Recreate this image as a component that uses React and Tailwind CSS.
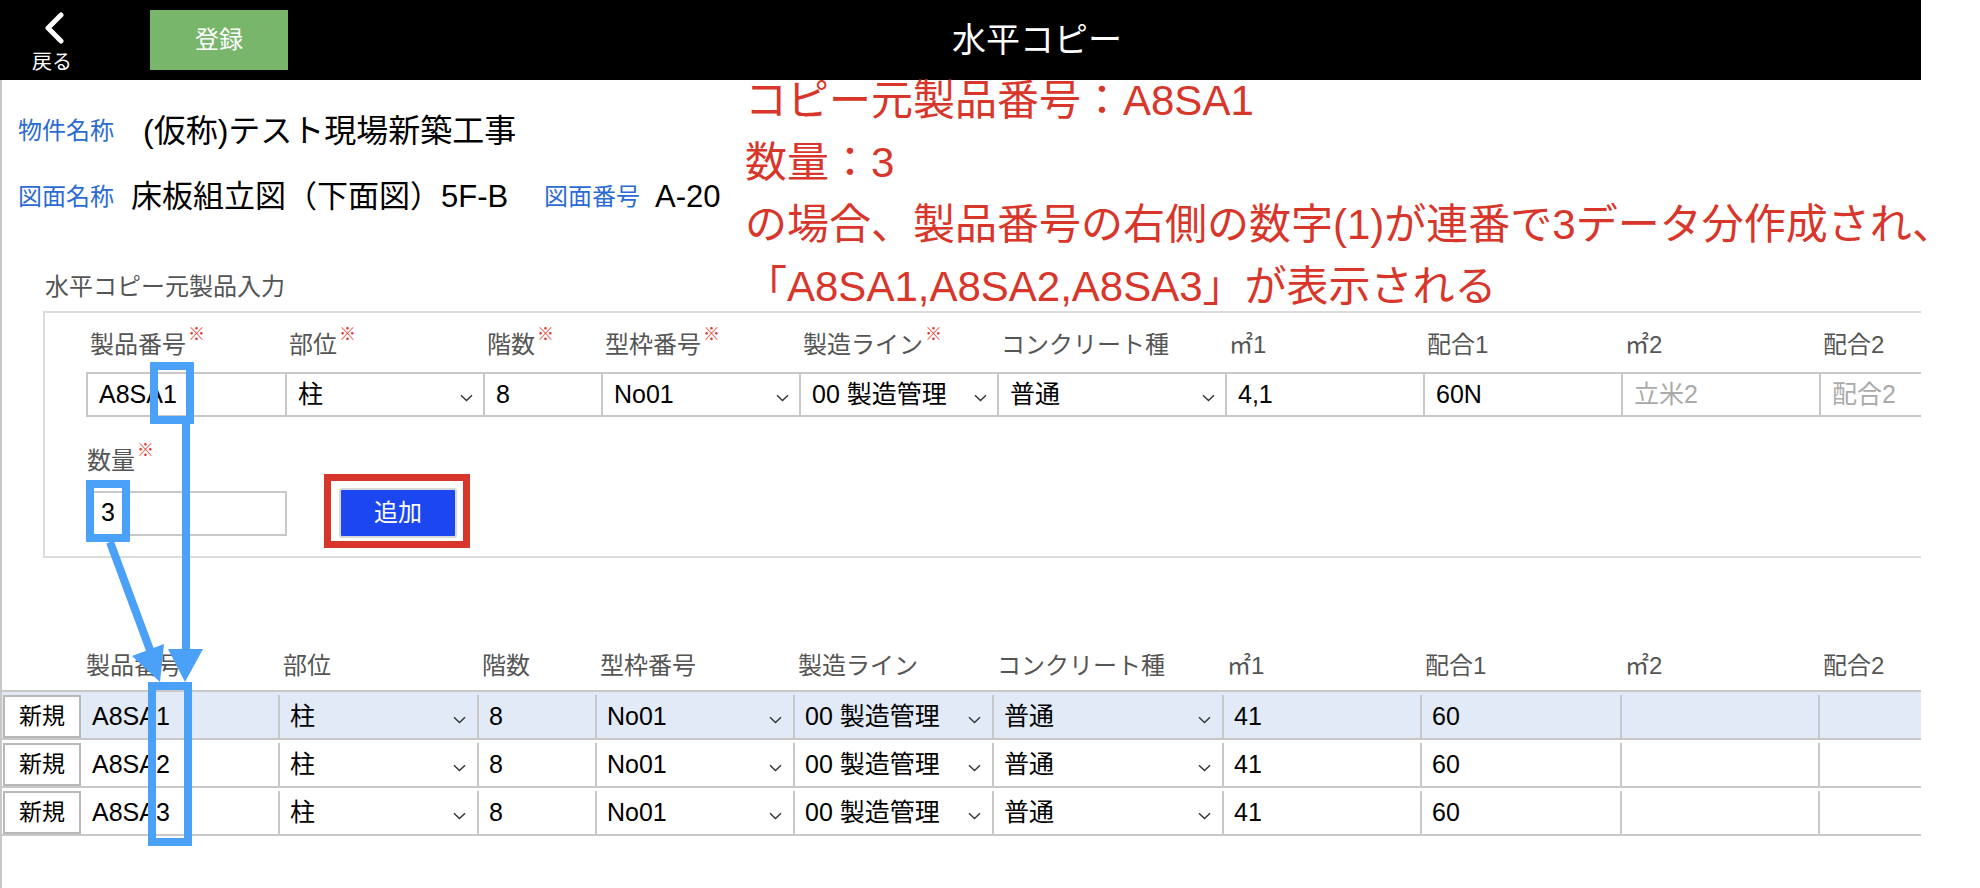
import React from 'react';

const FORM_COLS = [
    { label: '製品番号', w: 'w-[199px]', req: true, value: 'A8SA1' },
    { label: '部位', w: 'w-[198px]', req: true, value: '柱', select: true },
    { label: '階数', w: 'w-[118px]', req: true, value: '8' },
    { label: '型枠番号', w: 'w-[198px]', req: true, value: 'No01', select: true },
    { label: '製造ライン', w: 'w-[198px]', req: true, value: '00 製造管理', select: true },
    { label: 'コンクリート種', w: 'w-[228px]', value: '普通', select: true },
    { label: '㎡1', w: 'w-[198px]', value: '4,1' },
    { label: '配合1', w: 'w-[198px]', value: '60N' },
    { label: '㎡2', w: 'w-[198px]', placeholder: '立米2' },
    { label: '配合2', w: 'w-[198px]', placeholder: '配合2' },
];

const LIST_COLS = [
    { label: '製品番号', w: 'w-[197px]' },
    { label: '部位', w: 'w-[199px]', select: true },
    { label: '階数', w: 'w-[118px]' },
    { label: '型枠番号', w: 'w-[198px]', select: true },
    { label: '製造ライン', w: 'w-[199px]', select: true },
    { label: 'コンクリート種', w: 'w-[230px]', select: true },
    { label: '㎡1', w: 'w-[198px]' },
    { label: '配合1', w: 'w-[200px]' },
    { label: '㎡2', w: 'w-[198px]' },
    { label: '配合2', w: 'w-[198px]' },
];

const ROWS = [
    ['A8SA1', '柱', '8', 'No01', '00 製造管理', '普通', '41', '60', '', ''],
    ['A8SA2', '柱', '8', 'No01', '00 製造管理', '普通', '41', '60', '', ''],
    ['A8SA3', '柱', '8', 'No01', '00 製造管理', '普通', '41', '60', '', ''],
];

function Chevron() {
    return (
        <svg width="13" height="8" viewBox="0 0 13 8" className="shrink-0 mt-[6px]">
            <path d="M1 1.2l5.5 5.3L12 1.2" stroke="#333" strokeWidth="1.4" fill="none" />
        </svg>
    );
}

function Req() {
    return <span className="text-[#e0382c] text-[17px] relative -top-[10px] ml-[2px]">※</span>;
}

export default function App() {
    return (
        <div className="relative w-[1980px] h-[888px] bg-white overflow-hidden font-['Liberation_Sans','Noto_Sans_CJK_JP',sans-serif] text-black">
            <div className="w-[1921px] h-full overflow-hidden flex flex-col">
                {/* header */}
                <div className="h-[80px] shrink-0 bg-black flex items-start">
                    <div className="w-[104px] flex flex-col items-center pt-[12px]">
                        <svg width="22" height="32" viewBox="0 0 22 32" className="ml-[2px]">
                            <path d="M19 3L6 16l13 13" stroke="white" strokeWidth="5" fill="none" strokeLinecap="round" strokeLinejoin="round" />
                        </svg>
                        <span className="text-white text-[20px] leading-[20px] mt-[8px]">戻る</span>
                    </div>
                    <button className="ml-[46px] mt-[10px] w-[138px] h-[60px] bg-[#78b66c] text-white text-[24px] flex items-center justify-center">
                        登録
                    </button>
                    <div className="ml-[664px] h-[80px] flex items-center text-white text-[34px]">水平コピー</div>
                </div>

                <div className="flex-1 border-l-2 border-[#c8c8c8]">
                    {/* info */}
                    <div className="pt-[18px] pl-[16px]">
                        <div className="h-[66px] flex items-center">
                            <span className="text-[#2b6bd4] text-[24px] w-[96px]">物件名称</span>
                            <span className="text-[32px] ml-[29px]">(仮称)テスト現場新築工事</span>
                        </div>
                        <div className="h-[66px] flex items-center">
                            <span className="text-[#2b6bd4] text-[24px] w-[96px]">図面名称</span>
                            <span className="text-[31px] ml-[17px] w-[413px]">床板組立図（下面図）5F-B</span>
                            <span className="text-[#2b6bd4] text-[24px] w-[96px]">図面番号</span>
                            <span className="text-[31px] ml-[15px]">A-20</span>
                        </div>
                    </div>

                    {/* copy source form */}
                    <div className="mt-[42px] ml-[43px] text-[24px] leading-[30px] text-[#555]">水平コピー元製品入力</div>
                    <div className="mt-[9px] ml-[41px] w-[1900px] border-2 border-r-0 border-[#dcdcdc] pt-[12px] pb-[18px] pl-[41px]">
                        <div className="flex h-[40px]">
                            {FORM_COLS.map(c => (
                                <div key={c.label} className={`${c.w} shrink-0 pl-[4px] flex items-center text-[24px] leading-[30px] text-[#555] whitespace-nowrap`}>
                                    {c.label}
                                    {c.req && <Req />}
                                </div>
                            ))}
                        </div>
                        <div className="flex mt-[7px] h-[45px] w-max border-y-2 border-l-2 border-[#c8c8c8]">
                            {FORM_COLS.map(c => (
                                <div key={c.label} className={`${c.w} shrink-0 border-r-2 border-[#c8c8c8] flex items-center justify-between pl-[11px] pr-[10px] text-[25px] whitespace-nowrap`}>
                                    <span className={c.placeholder ? 'text-[#aaa]' : ''}>{c.value || c.placeholder}</span>
                                    {c.select && <Chevron />}
                                </div>
                            ))}
                        </div>
                        <div className="mt-[24px] h-[40px] flex items-center pl-[1px] text-[24px] leading-[30px] text-[#555]">
                            数量
                            <Req />
                        </div>
                        <div className="mt-[7px] h-[50px] flex items-center">
                            <div className="w-[201px] h-[45px] border-2 border-[#c8c8c8] flex items-center pl-[13px] text-[25px]">3</div>
                            <button className="ml-[52px] w-[118px] h-[50px] bg-[#1b46f0] border-2 border-[#d8d8d8] rounded-[3px] text-white text-[24px] flex items-center justify-center">
                                追加
                            </button>
                        </div>
                    </div>

                    {/* result list */}
                    <div className="mt-[87px]">
                        <div className="flex h-[45px] pl-[79px] pb-[4px]">
                            {LIST_COLS.map(c => (
                                <div key={c.label} className={`${c.w} shrink-0 pl-[5px] flex items-center text-[24px] leading-[30px] text-[#555] whitespace-nowrap`}>
                                    {c.label}
                                </div>
                            ))}
                        </div>
                        {ROWS.map((r, i) => (
                            <div
                                key={i}
                                className={`flex w-max border-b-2 border-[#c8c8c8] ${i === 0 ? 'h-[50px] border-t-2 bg-[#e1eaf6]' : 'h-[48px] bg-white'}`}
                            >
                                <button className="ml-[1px] mt-[3px] w-[78px] h-[43px] shrink-0 bg-white border-2 border-[#b8b8b8] text-[23px] flex items-center justify-center">
                                    新規
                                </button>
                                {LIST_COLS.map((c, j) => (
                                    <div
                                        key={c.label}
                                        className={`${c.w} shrink-0 mt-[3px] h-[43px] flex items-center justify-between text-[25px] whitespace-nowrap pr-[11px] ${j === 0 ? 'pl-[11px]' : 'pl-[10px] border-l-2 border-[#c8c8c8]'}`}
                                    >
                                        <span>{r[j]}</span>
                                        {c.select && <Chevron />}
                                    </div>
                                ))}
                            </div>
                        ))}
                    </div>
                </div>
            </div>

            {/* red annotation */}
            <div className="absolute left-[745px] top-[70px] text-[42px] leading-[62px] text-[#d8362a] whitespace-nowrap">
                <div>コピー元製品番号：A8SA1</div>
                <div>数量：3</div>
                <div>の場合、製品番号の右側の数字(1)が連番で3データ分作成され、</div>
                <div>「A8SA1,A8SA2,A8SA3」が表示される</div>
            </div>

            {/* markers */}
            <svg className="absolute left-0 top-0 pointer-events-none" width="1980" height="888" viewBox="0 0 1980 888">
                <rect x="327.5" y="477.5" width="139" height="67" fill="none" stroke="#d8362a" strokeWidth="7" />
                <g stroke="#4ba0f7" strokeWidth="8" fill="none">
                    <rect x="154" y="366" width="36" height="54" />
                    <rect x="90" y="484" width="36" height="54" />
                    <rect x="152" y="686" width="36" height="156" />
                    <line x1="186" y1="424" x2="186" y2="652" />
                    <line x1="110" y1="542" x2="150" y2="650" />
                </g>
                <polygon points="168,649 203,649 185,682" fill="#4ba0f7" />
                <polygon points="164,644 132,656 160,682" fill="#4ba0f7" />
            </svg>
        </div>
    );
}
